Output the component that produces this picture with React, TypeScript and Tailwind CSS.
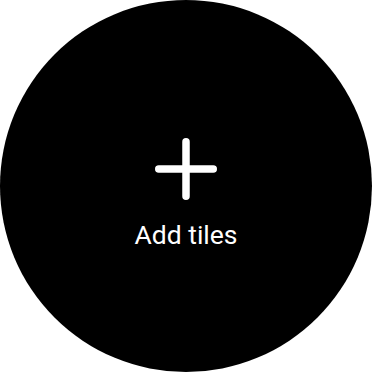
import React from 'react';

const App: React.FC = () => {
  return (
    <div className="w-[372px] h-[372px] bg-white">
      <div className="w-full h-full rounded-full bg-black flex flex-col items-center pt-[138px]">
        <svg width="62" height="62" viewBox="0 0 62 62">
          <path d="M31 3.75 V58.25 M3.75 31 H58.25" stroke="white" strokeWidth="7.5" strokeLinecap="round" fill="none" />
        </svg>
        <span className="mt-[22px] text-white text-[26.5px] leading-none font-['Roboto',sans-serif]">
          Add tiles
        </span>
      </div>
    </div>
  );
};

export default App;
